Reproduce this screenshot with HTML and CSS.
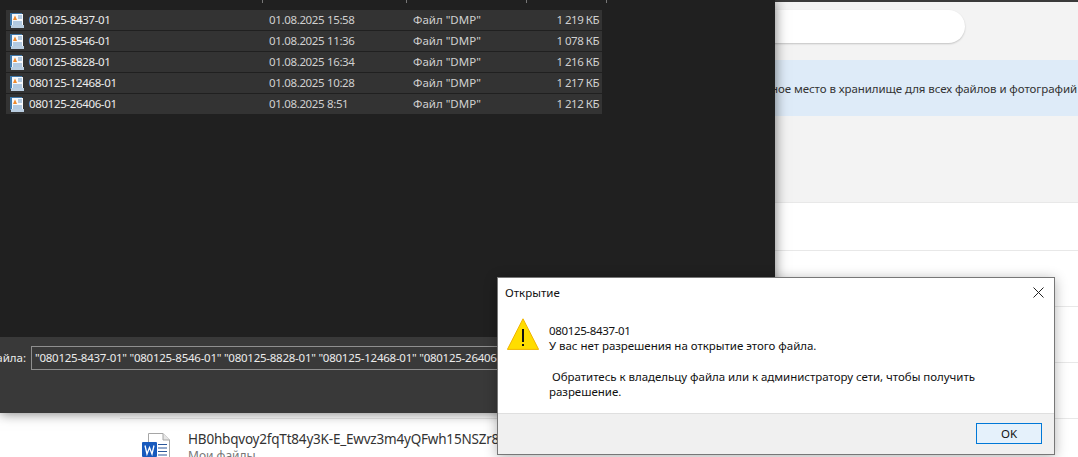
FILE: index.html
```html
<!DOCTYPE html>
<html lang="ru">

<head>
    <meta charset="UTF-8">
    <title>Открытие</title>
    <link rel="stylesheet" href="styles.css">
</head>

<body>
    <!-- страница за окнами -->
    <div class="page">
        <div class="searchBar">
            <div class="searchPill"></div>
        </div>
        <div class="banner">Получите дополнительное место в хранилище для всех файлов и фотографий</div>
        <div class="fileList">
            <div class="fileRow fileRowFirst"></div>
            <div class="fileRow"></div>
            <div class="fileRow"></div>
            <div class="fileRow"></div>
            <div class="fileRow wordRow">
                <svg class="wordIcon" width="28" height="26" viewBox="0 0 28 26">
                    <path d="M6.5 .5H21L27.5 7V26H6.5Z" fill="#fff" stroke="#a6a6a6" />
                    <path d="M21 .5V7H27.5" fill="#e6e6e6" stroke="#a6a6a6" />
                    <rect x="0" y="9" width="15" height="15" rx="1" fill="#185abd" />
                    <path d="M3 12.5L5 21L7.5 14.5L10 21L12 12.5" fill="none" stroke="#fff" stroke-width="1.3" />
                    <path d="M16 11.5H25M16 15H25M16 18.5H25M16 22H25" stroke="#2b579a" stroke-width="1.1" />
                </svg>
                <div class="wordText">
                    <div class="wordName">HB0hbqvoy2fqTt84y3K-E_Ewvz3m4yQFwh15NSZr8xkWq2</div>
                    <div class="wordSub">Мои файлы</div>
                </div>
            </div>
        </div>
    </div>

    <!-- тёмное окно выбора файла -->
    <div class="openDialog">
        <div class="dialogList">
            <div class="colMarks">
                <i class="colMark"></i>
                <i class="colMark"></i>
                <i class="colMark"></i>
                <i class="colMark"></i>
            </div>
            <div class="rows">
                <div class="row">
                    <svg class="dmpIcon" width="14" height="15" viewBox="0 0 14 15"><use href="#dmp" /></svg>
                    <span class="num">080125-8437-01</span><span class="num dim">01.08.2025 15:58</span><span class="dim">Файл "DMP"</span><span class="size dim">1 219 КБ</span>
                </div>
                <div class="row">
                    <svg class="dmpIcon" width="14" height="15" viewBox="0 0 14 15"><use href="#dmp" /></svg>
                    <span class="num">080125-8546-01</span><span class="num dim">01.08.2025 11:36</span><span class="dim">Файл "DMP"</span><span class="size dim">1 078 КБ</span>
                </div>
                <div class="row">
                    <svg class="dmpIcon" width="14" height="15" viewBox="0 0 14 15"><use href="#dmp" /></svg>
                    <span class="num">080125-8828-01</span><span class="num dim">01.08.2025 16:34</span><span class="dim">Файл "DMP"</span><span class="size dim">1 216 КБ</span>
                </div>
                <div class="row">
                    <svg class="dmpIcon" width="14" height="15" viewBox="0 0 14 15"><use href="#dmp" /></svg>
                    <span class="num">080125-12468-01</span><span class="num dim">01.08.2025 10:28</span><span class="dim">Файл "DMP"</span><span class="size dim">1 217 КБ</span>
                </div>
                <div class="row">
                    <svg class="dmpIcon" width="14" height="15" viewBox="0 0 14 15"><use href="#dmp" /></svg>
                    <span class="num">080125-26406-01</span><span class="num dim">01.08.2025 8:51</span><span class="dim">Файл "DMP"</span><span class="size dim">1 212 КБ</span>
                </div>
            </div>
        </div>
        <div class="dialogBottom">
            <div class="nameLabel"><span>Имя файла:</span></div>
            <div class="nameInput">"080125-8437-01" "080125-8546-01" "080125-8828-01" "080125-12468-01" "080125-26406-01"</div>
        </div>
    </div>

    <!-- окно ошибки -->
    <div class="msgBox">
        <div class="msgTitle">
            <span>Открытие</span>
            <svg width="11" height="11" viewBox="0 0 11 11">
                <path d="M.5 .5L10.5 10.5M10.5 .5L.5 10.5" stroke="#222" stroke-width="1" />
            </svg>
        </div>
        <div class="msgBody">
            <svg class="warnIcon" width="32" height="32" viewBox="0 0 32 32">
                <path d="M16 .8L31.6 31.4H.4Z" fill="#ffdd00" stroke="#f0b400" stroke-width="1" />
                <rect x="15" y="11" width="2" height="13" fill="#111" />
                <rect x="15" y="26" width="2" height="2" fill="#111" />
            </svg>
            <div class="msgText">
                <p class="num">080125-8437-01</p>
                <p>У вас нет разрешения на открытие этого файла.</p>
                <p class="msgGap">&nbsp;Обратитесь к владельцу файла или к администратору сети, чтобы получить разрешение.</p>
            </div>
        </div>
        <div class="msgFooter">
            <button class="okBtn">OK</button>
        </div>
    </div>

    <svg class="defs" width="0" height="0">
        <defs>
            <g id="dmp">
                <path d="M0 0H12V13H0Z" fill="#3f78aa" />
                <path d="M2 1H13V12H2Z" fill="#f6f8fb" />
                <path d="M1 12H14V15H1Z" fill="#b9cde0" />
                <path d="M3 7L5 2.5L7 7Z" fill="#f08a2c" />
                <path d="M8 3H12M8 5H12M3 9H12M3 11H12" stroke="#6f9cc8" stroke-width="1" />
            </g>
        </defs>
    </svg>
</body>

</html>
```
FILE: styles.css
```css
* {
    margin: 0;
    padding: 0;
    box-sizing: border-box;
}

html,
body {
    height: 100%;
}

body {
    position: relative;
    overflow: hidden;
    font-family: "Noto Sans", "Open Sans", sans-serif;
    font-size: 11.5px;
    background: #f3f3f3;
}

.defs {
    position: absolute;
}

.num {
    letter-spacing: -.35px;
}

/* страница */
.page {
    height: 457px;
    border-top: 2px solid #3a3a3a;
    overflow: hidden;
}

.searchBar {
    display: flex;
    justify-content: flex-end;
    height: 58px;
    padding: 8px 113px 0 0;
}

.searchPill {
    width: 500px;
    height: 33px;
    background: #fff;
    border-radius: 17px;
    box-shadow: 0 1px 2px rgba(0, 0, 0, .2);
}

.banner {
    display: flex;
    align-items: center;
    justify-content: flex-end;
    height: 56px;
    padding-right: 1px;
    background: #deebf8;
    color: #333;
    letter-spacing: -.08px;
    white-space: nowrap;
}

.fileList {
    margin-top: 86px;
    background: #fff;
    padding-left: 120px;
    height: 300px;
}

.fileRow {
    height: 56px;
    border-top: 1px solid #e8e8e8;
}

.fileRowFirst {
    height: 48px;
}

.wordRow {
    display: flex;
    gap: 18px;
    padding: 11px 0 0 22px;
}

.wordIcon {
    margin-top: 3px;
}

.wordText {
    white-space: nowrap;
}

.wordName {
    font-size: 13.5px;
    line-height: 18px;
    letter-spacing: -.2px;
    color: #333;
}

.wordSub {
    font-size: 12px;
    line-height: 16px;
    color: #777;
}

/* тёмное окно */
.openDialog {
    position: absolute;
    left: 0;
    top: 0;
    display: flex;
    flex-direction: column;
    width: 775px;
    height: 413px;
    background: #202020;
    box-shadow: 0 0 12px rgba(0, 0, 0, .55);
    color: #ececec;
}

.dialogList {
    flex: 1;
    padding-left: 6px;
}

.colMarks {
    display: flex;
    height: 10px;
    padding-left: 256px;
}

.colMark {
    width: 1px;
    height: 3px;
    background: #777;
    margin-right: 143px;
}

.colMark:nth-child(2) {
    margin-right: 119px;
}

.colMark:nth-child(3) {
    margin-right: 79px;
}

.rows {
    display: flex;
    flex-direction: column;
    gap: 1px;
    width: 596px;
}

.row {
    display: grid;
    grid-template-columns: 23px 240px 144px 1fr auto;
    align-items: center;
    height: 20px;
    padding: 0 3px 2px 0;
    background: #333;
    white-space: nowrap;
}

.dmpIcon {
    margin: 2px 0 0 4px;
}

.dim {
    color: #d0d0d0;
}

.size {
    letter-spacing: -.5px;
}

.dialogBottom {
    display: flex;
    height: 76px;
    padding-top: 9px;
    background: #393939;
    overflow: hidden;
}

.nameLabel {
    flex: none;
    display: flex;
    justify-content: flex-end;
    width: 31px;
    height: 24px;
    padding-right: 5px;
    line-height: 24px;
    overflow: hidden;
    white-space: nowrap;
}

.nameLabel span {
    flex: none;
}

.nameInput {
    width: 480px;
    height: 24px;
    padding: 0 3px;
    line-height: 22px;
    letter-spacing: -.25px;
    border: 1px solid #8f8f8f;
    white-space: nowrap;
    overflow: hidden;
}

/* окно ошибки */
.msgBox {
    position: absolute;
    left: 497px;
    top: 277px;
    display: flex;
    flex-direction: column;
    width: 558px;
    height: 178px;
    background: #fff;
    border: 1px solid #777;
    box-shadow: 0 2px 12px rgba(0, 0, 0, .3);
    color: #111;
}

.msgTitle {
    display: flex;
    align-items: center;
    justify-content: space-between;
    height: 28px;
    padding: 0 10px 0 7px;
}

.msgBody {
    flex: 1;
    display: flex;
    gap: 10px;
    padding: 12px 20px 0 9px;
}

.warnIcon {
    flex: none;
}

.msgText {
    width: 440px;
    padding-top: 5px;
    line-height: 15px;
    letter-spacing: -.03px;
}

.msgGap {
    margin-top: 16px;
}

.msgFooter {
    display: flex;
    justify-content: flex-end;
    height: 41px;
    padding: 9px 12px 0 0;
    background: #f0f0f0;
    border-top: 1px solid #dfdfdf;
}

.okBtn {
    width: 66px;
    height: 21px;
    font: inherit;
    color: #111;
    background: #e5f1fb;
    border: 1px solid #0078d7;
}
```
